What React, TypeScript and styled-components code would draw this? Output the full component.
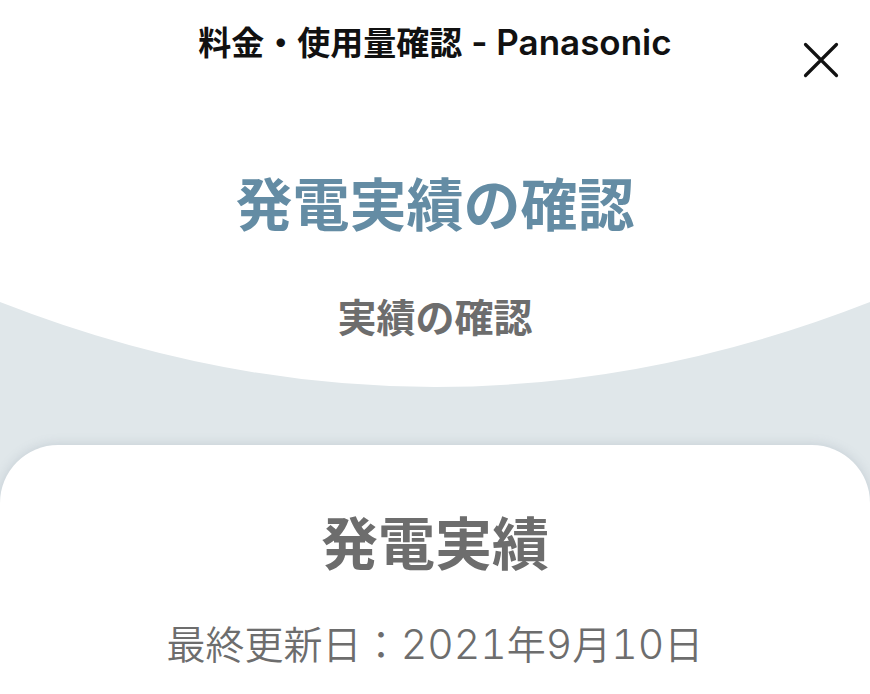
import React from "react";
import styled, { createGlobalStyle } from "styled-components";

const Global = createGlobalStyle`
  * { box-sizing: border-box; }
  body {
    margin: 0;
    background: #fff;
    color: #6d6d6d;
    font-family: "Noto Sans CJK JP", sans-serif;
  }
  h1, h2, p { margin: 0; }
`;

const Page = styled.div`
  min-height: 100vh;
  display: flex;
  flex-direction: column;
  background: #e0e7ea;
  overflow: hidden;
`;

const TitleBar = styled.header`
  display: grid;
  grid-template-columns: 98px 1fr 98px;
  height: 120px;
  background: #fff;
`;

const BarTitle = styled.p`
  grid-column: 2;
  padding-top: 16px;
  color: #111;
  font-size: 33px;
  font-weight: 700;
  line-height: 50px;
  text-align: center;
  white-space: nowrap;
`;

const Brand = styled.span`
  font-family: Inter, sans-serif;
  font-size: 35px;
  font-weight: 600;
  line-height: 1;
`;

const CloseButton = styled.button`
  justify-self: center;
  width: 48px;
  height: 48px;
  margin-top: 36px;
  padding: 0;
  border: 0;
  background: none;
  color: #111;
  svg { display: block; width: 48px; height: 48px; }
`;

const Hero = styled.section`
  display: grid;
  height: 267px;
  > * { grid-area: 1 / 1; }
`;

const Curve = styled.svg`
  width: 100%;
  height: 267px;
`;

const HeroText = styled.div`
  display: flex;
  flex-direction: column;
  align-items: center;
  gap: 44px;
  padding-top: 39px;
`;

const PageTitle = styled.h1`
  color: #648ca4;
  font-size: 57px;
  font-weight: 700;
  line-height: 84px;
`;

const Subtitle = styled.p`
  font-size: 39px;
  font-weight: 700;
  line-height: 56px;
`;

const Card = styled.main`
  flex: 1;
  display: flex;
  flex-direction: column;
  align-items: center;
  gap: 32px;
  margin-top: 58px;
  padding: 53px 24px 12px;
  border-radius: 58px 58px 0 0;
  background: #fff;
  box-shadow: 0 0 12px rgba(90, 110, 130, 0.22);
`;

const CardTitle = styled.h2`
  font-size: 57px;
  font-weight: 700;
  line-height: 84px;
`;

const Updated = styled.p`
  font-size: 39px;
  font-weight: 350;
  line-height: 56px;
  white-space: nowrap;
`;

const Digits = styled.span`
  font-family: Inter, sans-serif;
  font-size: 41px;
  font-weight: 300;
  font-variant-numeric: tabular-nums;
  line-height: 1;
`;

export default function App() {
  return (
    <Page>
      <Global />
      <TitleBar>
        <BarTitle>
          料金・使用量確認<Brand> - Panasonic</Brand>
        </BarTitle>
        <CloseButton type="button" aria-label="閉じる">
          <svg viewBox="0 0 48 48" fill="none" stroke="currentColor" strokeWidth="3.2" strokeLinecap="round">
            <path d="M8.5 8.5L39.5 39.5M39.5 8.5L8.5 39.5" />
          </svg>
        </CloseButton>
      </TitleBar>
      <Hero>
        <Curve viewBox="0 0 870 267" preserveAspectRatio="none" aria-hidden="true">
          <path d="M0 0H870V182Q653 267 435 267T0 182Z" fill="#fff" />
        </Curve>
        <HeroText>
          <PageTitle>発電実績の確認</PageTitle>
          <Subtitle>実績の確認</Subtitle>
        </HeroText>
      </Hero>
      <Card>
        <CardTitle>発電実績</CardTitle>
        <Updated>
          最終更新日：<Digits>2021</Digits>年<Digits>9</Digits>月<Digits>10</Digits>日
        </Updated>
      </Card>
    </Page>
  );
}
